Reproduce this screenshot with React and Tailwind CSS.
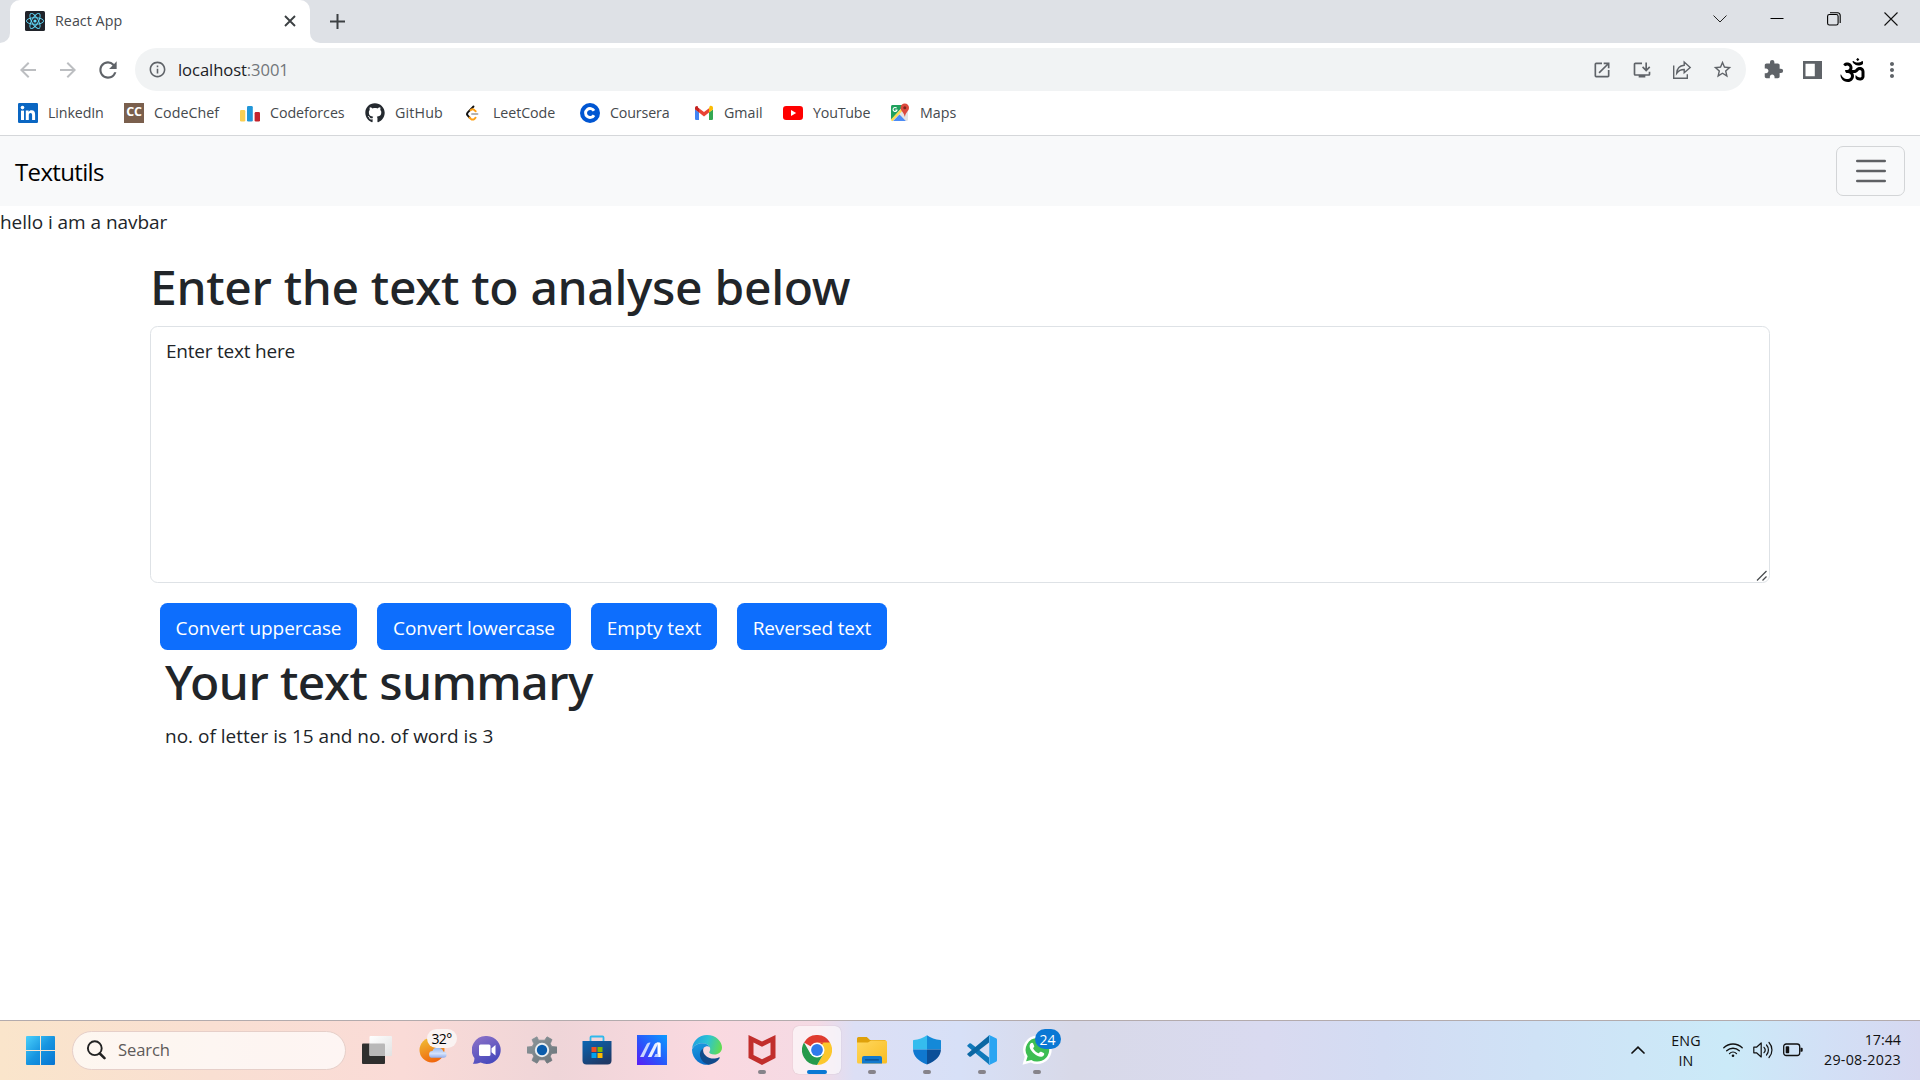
import {
  MdArrowBack,
  MdArrowForward,
  MdExtension,
  MdInfoOutline,
  MdInstallDesktop,
  MdMoreVert,
  MdOpenInNew,
  MdRefresh,
  MdStarOutline,
} from "react-icons/md";
import { FaGithub, FaOm } from "react-icons/fa";

/* ---------- Favicons ---------- */

function ReactFavicon() {
  return (
    <svg viewBox="0 0 20 20" className="h-5 w-5 shrink-0">
      <rect width="20" height="20" rx="1.5" fill="#20232a" />
      <g fill="none" stroke="#61dafb" strokeWidth="0.9">
        <ellipse cx="10" cy="10" rx="8.6" ry="3.3" />
        <ellipse cx="10" cy="10" rx="8.6" ry="3.3" transform="rotate(60 10 10)" />
        <ellipse cx="10" cy="10" rx="8.6" ry="3.3" transform="rotate(120 10 10)" />
      </g>
      <circle cx="10" cy="10" r="1.6" fill="#61dafb" />
    </svg>
  );
}

function LinkedInIcon() {
  return (
    <svg viewBox="0 0 20 20" className="h-5 w-5">
      <rect width="20" height="20" rx="1.2" fill="#0a66c2" />
      <g fill="#fff">
        <circle cx="4.5" cy="4.6" r="1.8" />
        <rect x="3" y="7.6" width="3" height="9.4" />
        <path d="M7.8 7.6h2.8v1.3c.5-.9 1.5-1.6 3-1.6 2.8 0 3.5 1.8 3.5 4.4V17h-3v-4.7c0-1.3-.2-2.3-1.6-2.3s-1.7 1-1.7 2.3V17h-3z" />
      </g>
    </svg>
  );
}

function CodeChefIcon() {
  return (
    <div className="flex h-5 w-5 items-center justify-center bg-[#7a5f4d] pb-0.5 font-['Open_Sans'] text-[12.5px] leading-none font-bold tracking-[-0.3px] text-white">
      CC
    </div>
  );
}

function CodeforcesIcon() {
  return (
    <svg viewBox="0 0 20 20" className="h-5 w-5">
      <rect x="0" y="7" width="5.3" height="11.6" rx="1.3" fill="#fbcf52" />
      <rect x="7" y="3" width="5.8" height="15.6" rx="1.3" fill="#2196d8" />
      <rect x="14.6" y="9" width="5.4" height="9.6" rx="1.3" fill="#c3232c" />
    </svg>
  );
}

function LeetCodeIcon() {
  return (
    <svg viewBox="0 0 20 20" className="h-5 w-5" fill="none" strokeLinecap="round" strokeWidth="1.9">
      <path d="M10.500 3.500 4.800 9.300c-1.100 1.200-1.100 2.300 0 3.400l1.700 1.800" stroke="#111" />
      <path d="M6.500 14.500l1.200 1.200c1.200 1.100 2.700 1.100 3.900 0l1-1" stroke="#ffa116" />
      <path d="M7.500 7.200c1.500-1.200 2.900-1.100 4 0l1.200 1.100" stroke="#ffa116" />
      <path d="M9 11h5.500" stroke="#b3b3b3" />
    </svg>
  );
}

function CourseraIcon() {
  return (
    <svg viewBox="0 0 20 20" className="h-5 w-5">
      <circle cx="10" cy="10" r="10" fill="#0056d2" />
      <path d="M14 7.800A4.500 4.500 0 1 0 14 12.200" fill="none" stroke="#fff" strokeWidth="2.900" />
    </svg>
  );
}

function GmailIcon() {
  return (
    <svg viewBox="0 0 20 20" className="h-5 w-5">
      <path d="M1 6.500v9.200c0 .7.600 1.300 1.300 1.300H5V9.300z" fill="#4285f4" />
      <path d="M19 6.500v9.200c0 .7-.6 1.300-1.300 1.300H15V9.300z" fill="#34a853" />
      <path d="M15 5.300v4.300l4-3V5c0-2-2-2.700-3.300-1.800z" fill="#fbbc04" />
      <path d="M5 9.600V5.300l5 3.700 5-3.700v4.300l-5 3.800z" fill="#ea4335" />
      <path d="M1 5v1.600l4 3V5.300l-.8-.6-.5-1.500C2.500 2.500 1 3.300 1 5z" fill="#c5221f" />
    </svg>
  );
}

function YouTubeIcon() {
  return (
    <svg viewBox="0 0 20 20" className="h-5 w-5">
      <rect y="3" width="20" height="14" rx="3.200" fill="#f00" />
      <path d="M8 7v6l5.200-3z" fill="#fff" />
    </svg>
  );
}

function MapsIcon() {
  return (
    <svg viewBox="0 0 20 20" className="h-5 w-5">
      <path d="M2.500 2H14l4 7v7.500c0 .8-.7 1.500-1.500 1.500h-14C1.700 18 1 17.300 1 16.500v-13C1 2.700 1.700 2 2.500 2z" fill="#e4e4e4" />
      <path d="M2.500 2H14L1.500 16.500C1 16 1 15 1 15V3.500C1 2.700 1.700 2 2.500 2z" fill="#1fa15d" />
      <path d="M1.500 17.500 14.500 4" stroke="#fddb4f" strokeWidth="2.400" />
      <path d="m9.500 11.500 6.300 6.500H3.200z" fill="#4c8bf5" />
      <path d="M14.800.5c2.400 0 4.200 1.800 4.200 4.200 0 3.300-3.300 4.300-4 8.800h-.4c-.7-4.500-4-5.500-4-8.800 0-2.400 1.800-4.200 4.200-4.200z" fill="#dc4a3d" />
      <circle cx="14.800" cy="4.700" r="1.500" fill="#7d251e" />
      <path d="M6.600 5.200A2 2 0 1 0 7 7H5.300" fill="none" stroke="#fff" strokeWidth="1.100" />
    </svg>
  );
}

/* ---------- Browser chrome ---------- */

function TabStrip() {
  return (
    <div className="flex h-[43px] bg-white">
      <div className="w-2.5 rounded-br-[10px] bg-[#dee1e6]" />
      <div className="w-[300px] bg-[#dee1e6]">
        <div className="flex h-full items-center rounded-t-[10px] bg-white pr-[14px] pb-[1px] pl-[15px]">
          <ReactFavicon />
          <span className="ml-[10px] grow text-[14.250px] tracking-[0.050px] text-[#45494d]">React App</span>
          <svg viewBox="0 0 12 12" className="h-3 w-3" stroke="#3c4043" strokeWidth="1.900">
            <path d="M1 1l10 10M11 1 1 11" />
          </svg>
        </div>
      </div>
      <div className="flex grow items-start rounded-bl-[10px] bg-[#dee1e6] pl-5">
        <svg viewBox="0 0 15 15" className="mt-[14px] h-[15px] w-[15px]" stroke="#3c4043" strokeWidth="2">
          <path d="M7.500 0v15M0 7.500h15" />
        </svg>
        <div className="mt-3 mr-[22px] ml-auto flex items-center gap-[43px]">
          <svg viewBox="0 0 14 14" className="h-3.5 w-3.5" fill="none" stroke="#222" strokeWidth="1">
            <path d="m.5 3.500 6.500 6.500 6.500-6.500" />
          </svg>
          <svg viewBox="0 0 14 14" className="h-3.5 w-3.5" stroke="#000" strokeWidth="1">
            <path d="M.5 6.500h13" />
          </svg>
          <svg viewBox="0 0 14 14" className="h-3.5 w-3.5" fill="none" stroke="#000" strokeWidth="1.100">
            <rect x="0.600" y="2.500" width="10.500" height="10.500" rx="1.800" />
            <path d="M3 .7h7.500A2.800 2.800 0 0 1 13.200 3.500V11" />
          </svg>
          <svg viewBox="0 0 14 14" className="h-3.5 w-3.5" stroke="#111" strokeWidth="1.100">
            <path d="m.5.5 13 13M13.500.5l-13 13" />
          </svg>
        </div>
      </div>
    </div>
  );
}

function ShareIcon() {
  return (
    <svg viewBox="0 0 20 20" className="h-5 w-5" fill="none" stroke="#5f6368" strokeWidth="1.400">
      <path d="M1.700 5.500v12.800h13.600v-4" />
      <path d="M12.200 2v3.300C7.500 5.700 5 9 4.700 13.300c1.800-2.600 4-3.800 7.500-3.800v3.300l6-5.400z" />
    </svg>
  );
}

function Toolbar() {
  return (
    <div className="flex h-[53px] items-center pr-4 pl-4">
      <MdArrowBack className="h-6 w-6 text-[#bcbec1]" />
      <MdArrowForward className="ml-4 h-6 w-6 text-[#bcbec1]" />
      <MdRefresh className="ml-[15px] h-[26px] w-[26px] text-[#5f6368]" />
      <div className="ml-[14px] flex h-[43px] grow items-center rounded-full bg-[#f1f3f4] pr-[13px] pl-[13px]">
        <MdInfoOutline className="h-[19px] w-[19px] text-[#5f6368]" />
        <span className="ml-[11px] grow pt-[1px] text-[16.600px] tracking-[-0.080px] text-[#202124]">
          localhost<span className="text-[#72767a]">:3001</span>
        </span>
        <div className="flex items-center gap-5 text-[#5f6368]">
          <MdOpenInNew className="h-5 w-5" />
          <MdInstallDesktop className="h-5 w-5" />
          <ShareIcon />
          <MdStarOutline className="h-[21px] w-[21px]" />
        </div>
      </div>
      <MdExtension className="ml-[17px] h-[21px] w-[21px] text-[#5f6368]" />
      <svg viewBox="0 0 19 18" className="ml-[19px] h-[18px] w-[19px]">
        <path fillRule="evenodd" d="M0 0h19v18H0zM2.500 2.800v12.400h9.300V2.800z" fill="#5f6368" />
      </svg>
      <FaOm className="ml-[18px] h-6 w-[25px] text-black" />
      <MdMoreVert className="ml-[15px] h-6 w-6 text-[#5f6368]" />
    </div>
  );
}

function Bookmark({ icon, label, className }) {
  return (
    <div className="flex shrink-0 items-center gap-2.5">
      {icon}
      <span className={className}>{label}</span>
    </div>
  );
}

function BookmarksBar() {
  return (
    <div className="flex h-[40px] items-center border-b border-[#d5d7da] pb-[5px] pl-[18px] text-[14.250px] text-[#45494d]">
      <Bookmark icon={<LinkedInIcon />} label="LinkedIn" className="w-[76px] tracking-[-0.120px]" />
      <Bookmark icon={<CodeChefIcon />} label="CodeChef" className="w-[86px] tracking-[0.050px]" />
      <Bookmark icon={<CodeforcesIcon />} label="Codeforces" className="w-[95px] tracking-[-0.050px]" />
      <Bookmark
        icon={<FaGithub className="h-5 w-5 text-[#24292f]" />}
        label="GitHub"
        className="w-[68px] tracking-[0.150px]"
      />
      <Bookmark icon={<LeetCodeIcon />} label="LeetCode" className="w-[87px] tracking-[-0.080px]" />
      <Bookmark icon={<CourseraIcon />} label="Coursera" className="w-[84px] tracking-[-0.150px]" />
      <Bookmark icon={<GmailIcon />} label="Gmail" className="w-[59px]" />
      <Bookmark icon={<YouTubeIcon />} label="YouTube" className="w-[77px] tracking-[-0.200px]" />
      <Bookmark icon={<MapsIcon />} label="Maps" />
    </div>
  );
}

/* ---------- Page ---------- */

function Navbar() {
  return (
    <nav className="flex h-[70px] items-center justify-between bg-[#f8f9fa] px-[15px]">
      <span className="pt-[1px] text-[24px] tracking-[-0.650px] text-black">Textutils</span>
      <button className="flex h-[50px] w-[69px] items-center justify-center rounded-[7px] border border-[#d3d5d7]">
        <svg viewBox="0 0 30 24" className="h-6 w-[30px]" stroke="#5f6164" strokeWidth="2.500" strokeLinecap="round">
          <path d="M1.250 2h27.500M1.250 12h27.500M1.250 22h27.500" />
        </svg>
      </button>
    </nav>
  );
}

function PrimaryButton({ children, className }) {
  return (
    <button
      className={`h-[47px] rounded-[7.500px] bg-[#0d6efd] pt-1 text-center text-[19px] whitespace-nowrap text-white ${className}`}
    >
      {children}
    </button>
  );
}

function TextForm() {
  return (
    <main className="mx-[150px] grow text-[19px] text-[#212529]">
      <h1 className="mt-[20px] font-['Noto_Sans'] text-[48px] leading-[60px] font-medium tracking-[-0.320px]">
        Enter the text to analyse below
      </h1>
      <div className="mt-[9px] flex h-[257px] flex-col justify-between rounded-[7.500px] border border-[#dee2e6] pl-[15px]">
        <p className="mt-[9px] leading-[30px] tracking-[-0.220px]">Enter text here</p>
        <svg viewBox="0 0 12 12" className="mr-[1px] mb-0 h-3 w-3 self-end" stroke="#4a4d50" strokeWidth="1.300">
          <path d="M1 10.500 10.500 1M6.500 10.500l4-4" />
        </svg>
      </div>
      <div className="mt-5 ml-2.5 flex gap-5">
        <PrimaryButton className="w-[197px] tracking-[-0.090px]">Convert uppercase</PrimaryButton>
        <PrimaryButton className="w-[194px] tracking-[-0.090px]">Convert lowercase</PrimaryButton>
        <PrimaryButton className="w-[126px] tracking-[-0.050px]">Empty text</PrimaryButton>
        <PrimaryButton className="w-[150px] tracking-[-0.180px]">Reversed text</PrimaryButton>
      </div>
      <section className="ml-[15px]">
        <h1 className="mt-[2px] font-['Noto_Sans'] text-[48px] leading-[60px] font-medium tracking-[-0.560px]">
          Your text summary
        </h1>
        <p className="mt-[9px] leading-[30px]">no. of letter is 15 and no. of word is 3</p>
      </section>
    </main>
  );
}

/* ---------- Taskbar icons ---------- */

function StartIcon() {
  return (
    <svg viewBox="0 0 29 29" className="h-[29px] w-[29px]">
      <defs>
        <linearGradient id="start" x1="0" y1="0" x2="29" y2="29" gradientUnits="userSpaceOnUse">
          <stop stopColor="#4bd0fb" />
          <stop offset="0.500" stopColor="#1795e0" />
          <stop offset="1" stopColor="#0674d2" />
        </linearGradient>
      </defs>
      <path
        fill="url(#start)"
        d="M1 0h13v14H0V1a1 1 0 0 1 1-1zM15 0h13a1 1 0 0 1 1 1v13H15zM0 15h14v14H1a1 1 0 0 1-1-1zM15 15h14v13a1 1 0 0 1-1 1H15z"
      />
    </svg>
  );
}

function TaskViewIcon() {
  return (
    <svg viewBox="0 0 30 30" className="h-[30px] w-[30px]">
      <defs>
        <linearGradient id="tvLight" x1="0" y1="0" x2="1" y2="1">
          <stop stopColor="#fff" />
          <stop offset="1" stopColor="#e2e2e2" />
        </linearGradient>
      </defs>
      <rect x="0" y="8.500" width="23" height="20.500" rx="1" fill="#2f2f2e" />
      <rect x="7.500" y="1" width="22.500" height="20" rx="1" fill="url(#tvLight)" />
      <path d="M7.500 8.500H22a1 1 0 0 1 1 1V21H8.500a1 1 0 0 1-1-1z" fill="#b9b8b8" />
    </svg>
  );
}

function WeatherIcon() {
  return (
    <div className="relative h-[30px] w-[30px]">
      <svg viewBox="0 0 30 30" className="h-[30px] w-[30px]">
        <defs>
          <linearGradient id="sun" x1="0.200" y1="0" x2="0.600" y2="1">
            <stop stopColor="#f0bd35" />
            <stop offset="1" stopColor="#f0640c" />
          </linearGradient>
          <linearGradient id="cloud" x1="0" y1="0" x2="0" y2="1">
            <stop stopColor="#8fb4ee" />
            <stop offset="0.600" stopColor="#d6e3fa" />
            <stop offset="1" stopColor="#8facec" />
          </linearGradient>
        </defs>
        <circle cx="15" cy="15" r="12.500" fill="url(#sun)" />
        <path d="M15.500 22.800a3.400 3.400 0 0 1 0-6.800c1-2.600 3.400-4 6-3.600 2.600.4 4.300 2 4.700 4a3.200 3.200 0 0 1 .3 6.400z" fill="url(#cloud)" />
      </svg>
      <span className="absolute -top-[6px] left-[10px] flex h-[19px] w-[30px] items-center justify-center rounded-full bg-[#faf3f2] text-[14px] tracking-[-0.600px] text-black">
        32°
      </span>
    </div>
  );
}

function ChatIcon() {
  return (
    <svg viewBox="0 0 30 30" className="h-[30px] w-[30px]">
      <defs>
        <linearGradient id="chat" x1="0" y1="0" x2="0.500" y2="1">
          <stop stopColor="#9074c8" />
          <stop offset="1" stopColor="#4a4bbd" />
        </linearGradient>
      </defs>
      <path d="M15 1a14 14 0 1 1-6.400 26.600C6 28.800 3 29 .8 28.800c1-1.300 1.700-3.600 1.600-5.800A14 14 0 0 1 15 1z" fill="url(#chat)" />
      <rect x="7" y="9.500" width="11.500" height="11.500" rx="1.500" fill="#fff" />
      <path d="M19.500 13.300 23.500 10v10.500l-4-3.300z" fill="#fff" />
    </svg>
  );
}

function SettingsIcon() {
  return (
    <svg viewBox="0 0 30 30" className="h-[30px] w-[30px]">
      <defs>
        <linearGradient id="gear" x1="0" y1="0" x2="1" y2="1">
          <stop stopColor="#8d979c" />
          <stop offset="1" stopColor="#6a7378" />
        </linearGradient>
      </defs>
      <path
        d="M11.500 5.200 10 1.800 5 4.600l1.800 4.200-1.600 2.700L0 12v6l5.200.5 1.600 2.700L5 25.400l5 2.800 2.300-3.400h5.400l2.300 3.400 5-2.800-1.800-4.200 1.600-2.700L30 18v-6l-5.200-.5-1.600-2.700L25 4.600l-5-2.800-2.300 3.400z"
        fill="url(#gear)"
        stroke="url(#gear)"
        strokeLinejoin="round"
        strokeWidth="0.800"
      />
      <circle cx="15" cy="15" r="7.200" fill="#e9eef1" />
      <circle cx="15" cy="15" r="5.200" fill="#0a5cab" />
    </svg>
  );
}

function StoreIcon() {
  return (
    <svg viewBox="0 0 30 30" className="h-[30px] w-[30px]">
      <defs>
        <linearGradient id="store" x1="0" y1="0" x2="0.600" y2="1">
          <stop stopColor="#0a66b4" />
          <stop offset="1" stopColor="#1f3a67" />
        </linearGradient>
      </defs>
      <path d="M8.500 7V2.500a1 1 0 0 1 1-1h11a1 1 0 0 1 1 1V7" fill="none" stroke="#2fb9ec" strokeWidth="1.800" />
      <path d="M.5 6h29v19.500a4 4 0 0 1-4 4h-21a4 4 0 0 1-4-4z" fill="url(#store)" />
      <path d="M9.500 12h5v5h-5z" fill="#f25022" />
      <path d="M15.500 12h5v5h-5z" fill="#7fba00" />
      <path d="M9.500 18h5v5h-5z" fill="#00a4ef" />
      <path d="M15.500 18h5v5h-5z" fill="#ffb900" />
    </svg>
  );
}

function MyAsusIcon() {
  return (
    <svg viewBox="0 0 30 30" className="h-[30px] w-[30px]">
      <defs>
        <linearGradient id="asus" x1="1" y1="0" x2="0" y2="1">
          <stop stopColor="#0b9cff" />
          <stop offset="0.550" stopColor="#2a55fb" />
          <stop offset="1" stopColor="#5a1cf5" />
        </linearGradient>
      </defs>
      <rect width="30" height="30" fill="url(#asus)" />
      <path d="M3 22 9.500 9.500c.7-1.300 1.700-2 3.300-2h.7L6.700 22z" fill="#c9d6ff" />
      <path d="M10.800 22l6.500-12.500c.7-1.300 1.700-2 3.200-2h1.200L14.500 22z" fill="#e8eeff" />
      <path d="M20.200 7.500h2c1 0 1.500.5 1.500 1.500V22h-3.200V10z" fill="#fff" />
      <path d="M17 22l1.500-3h3v3z" fill="#b9cbff" />
    </svg>
  );
}

function EdgeIcon() {
  return (
    <svg viewBox="0 0 30 30" className="h-[30px] w-[30px]">
      <defs>
        <linearGradient id="edgeTop" x1="0" y1="0.300" x2="1" y2="0.500">
          <stop stopColor="#1f9fe0" />
          <stop offset="0.500" stopColor="#2cc3d4" />
          <stop offset="1" stopColor="#62dc51" />
        </linearGradient>
        <linearGradient id="edgeLeft" x1="0.200" y1="0" x2="0.500" y2="1">
          <stop stopColor="#1a9be0" />
          <stop offset="1" stopColor="#0a6bc8" />
        </linearGradient>
      </defs>
      <path d="M.1 13.800C.8 6 7 0 15 0c9 0 15 6.500 15 12.500 0 4.800-3.800 7-7.500 7-3.500 0-5.300-1.200-5.300-2.200 0-.8 1-1.200 1-3.300 0-2.800-3.200-5.800-8-5.800-5 0-8.500 2.500-10.100 5.600z" fill="url(#edgeTop)" />
      <path d="M0 14.500C1.500 10.600 5.500 8.200 10.200 8.200c3.600 0 6.300 1.500 7.500 3.600-2-1-4.500-.6-6.200 1.100-2.300 2.300-2.600 6.200-.8 9.900 1.500 3 4 5.400 7.300 6.700A15 15 0 0 1 0 15z" fill="url(#edgeLeft)" />
      <path d="M11.800 13c-3 1.800-4.800 5.300-3.300 9.400 1.400 3.800 4.800 7 9.600 7.100 4.200-.8 7.500-3 9.500-6.200.4-.6-.2-1.200-.9-.8-1.500.8-3.400 1.100-5 1.100-5.700 0-10.300-3.700-10.600-8.200 0-.9.200-1.700.7-2.400z" fill="#114a8b" />
    </svg>
  );
}

function McAfeeIcon() {
  return (
    <svg viewBox="0 0 30 30" className="h-[30px] w-[30px]">
      <path
        fillRule="evenodd"
        d="M1.500 0 15 6.500 28.500 0v23L15 30 1.500 23zM6.500 7.500V20L15 24.300 23.500 20V7.500L15 11.700z"
        fill="#c12e2c"
      />
    </svg>
  );
}

function ChromeIcon() {
  return (
    <svg viewBox="0 0 30 30" className="h-[30px] w-[30px]">
      <path d="M15 15 2 7.500A15 15 0 0 1 28 7.500z" fill="#df3b2f" />
      <path d="M15 7.500h13A15 15 0 0 1 15 30l6.500-11.300z" fill="#fcc72c" />
      <path d="M2 7.500A15 15 0 0 0 15 30l6.500-11.200-13-.1z" fill="#259a4b" />
      <path d="M15 7.500h6.600L15 15z" fill="#df3b2f" />
      <circle cx="15" cy="15" r="7.500" fill="#fff" />
      <circle cx="15" cy="15" r="5.900" fill="#2f7bea" />
    </svg>
  );
}

function FolderIcon() {
  return (
    <svg viewBox="0 0 30 30" className="h-[30px] w-[30px]">
      <defs>
        <linearGradient id="folder" x1="0" y1="0" x2="1" y2="1">
          <stop stopColor="#ffd75e" />
          <stop offset="1" stopColor="#f9bd22" />
        </linearGradient>
      </defs>
      <path d="M0 3.500A1.500 1.500 0 0 1 1.500 2h8.300L13 5h15.500v5H0z" fill="#dfa10b" />
      <path d="M0 7.500h11l3-2h14.500A1.500 1.500 0 0 1 30 7v20a1.500 1.500 0 0 1-1.500 1.500h-27A1.500 1.500 0 0 1 0 27z" fill="url(#folder)" />
      <path d="M5 28.500V23a2 2 0 0 1 2-2h16a2 2 0 0 1 2 2v5.500z" fill="#1279cd" />
      <path d="M8.500 24.800h13" stroke="#0a4d8c" strokeWidth="1.200" strokeLinecap="round" />
    </svg>
  );
}

function ShieldIcon() {
  return (
    <svg viewBox="0 0 30 30" className="h-[30px] w-[30px]">
      <defs>
        <clipPath id="shieldClip">
          <path d="M15 .3C18.500 3 23.500 4.800 28.300 5c.5 0 .7.3.7.700V14c0 7-5.500 12.500-14 15.500C6.500 26.500 1 21 1 14V5.700c0-.4.200-.7.7-.7C6.500 4.800 11.500 3 15 .3z" />
        </clipPath>
      </defs>
      <g clipPath="url(#shieldClip)">
        <path d="M0 0h15v14.500H0z" fill="#35bcee" />
        <path d="M15 0h15v14.500H15z" fill="#1489d8" />
        <path d="M0 14.500h15V30H0z" fill="#0f78d0" />
        <path d="M15 14.500h15V30H15z" fill="#0b4f98" />
      </g>
    </svg>
  );
}

function VSCodeIcon() {
  return (
    <svg viewBox="0 0 30 30" className="h-[30px] w-[30px]">
      <path d="M.5 10.200 2.300 8.500a1.400 1.400 0 0 1 1.700 0L22 22.500v7L.6 11.500a.9.900 0 0 1-.1-1.300z" fill="#1079ba" />
      <path d="M.5 19.800 2.300 21.500a1.400 1.400 0 0 0 1.700 0L22 7.500v-7L.6 18.500a.9.900 0 0 0-.1 1.300z" fill="#0b67a3" />
      <path d="M21.500 29.700a1.600 1.600 0 0 0 1.300.1l6.200-3a1.700 1.700 0 0 0 1-1.500V4.700a1.700 1.700 0 0 0-1-1.500L22.800.2a1.600 1.600 0 0 0-1.300.1c.5.2.8.7.8 1.200v27c0 .5-.3 1-.8 1.200z" fill="#2aa5f2" />
    </svg>
  );
}

function WhatsAppIcon() {
  return (
    <div className="relative h-[30px] w-[30px]">
      <svg viewBox="0 0 30 30" className="h-[30px] w-[30px]">
        <path d="M15.500.5a14.300 14.300 0 1 1-6.700 27L.5 29.700l2.300-8A14.300 14.300 0 0 1 15.500.5z" fill="#fff" />
        <path d="M15.500 3a11.800 11.800 0 1 1-6.200 21.900l-5.200 1.400 1.500-5A11.800 11.800 0 0 1 15.500 3z" fill="#3dbe52" />
        <path
          d="M11 8.200c-.4-.8-1.500-.7-2.200 0-3 3.200.3 7.800 3.200 10.300 2.900 2.400 7.300 4.700 9.700 1.900.8-1 .7-1.900 0-2.300l-2.500-1.300c-.8-.4-1.300.1-1.900 1-.4.500-.8.5-1.400.2-2-.9-3.600-2.300-4.600-4.200-.3-.5-.1-.8.3-1.200.6-.7.8-1.200.5-1.900z"
          fill="#fff"
        />
      </svg>
      <span className="absolute -top-[6px] left-[13px] flex h-5 w-[26px] items-center justify-center rounded-full bg-[#0a78d4] text-[14px] text-white">
        24
      </span>
    </div>
  );
}

/* ---------- Taskbar ---------- */

function TaskItem({ children, running, active }) {
  return (
    <div className="flex w-[55px] justify-center">
      <div
        className={
          active
            ? "flex h-12 w-12 flex-col items-center rounded-md bg-white/60 pt-[9px] shadow-[0_0_1px_rgba(0,0,0,0.250)]"
            : "flex h-12 w-12 flex-col items-center pt-[9px]"
        }
      >
        {children}
        {running && <div className="mt-[5px] h-1 w-2 rounded-full bg-[#86838a]" />}
        {active && <div className="mt-[5px] h-1 w-5 rounded-full bg-[#0a78d4]" />}
      </div>
    </div>
  );
}

function TrayIcons() {
  return (
    <div className="flex items-center gap-2.5">
      <svg viewBox="0 0 20 16" className="h-4 w-5" fill="none" stroke="#111" strokeWidth="1.300" strokeLinecap="round">
        <path d="M.8 5.800a13 13 0 0 1 18.400 0M3.700 8.800a9 9 0 0 1 12.600 0M6.500 11.600a5 5 0 0 1 7 0" />
        <circle cx="10" cy="13.700" r="1.300" fill="#111" stroke="none" />
      </svg>
      <svg viewBox="0 0 20 18" className="h-[18px] w-5" fill="none" stroke="#111" strokeWidth="1.200" strokeLinecap="round" strokeLinejoin="round">
        <path d="M.8 6.200h2.700L8.200 2v14l-4.700-4.200H.8zM11 6.300a4 4 0 0 1 0 5.400M13.500 4a7.500 7.500 0 0 1 0 10M16 1.500a11 11 0 0 1 0 15" />
      </svg>
      <svg viewBox="0 0 20 14" className="h-3.5 w-5">
        <rect x="0.700" y="1" width="16" height="11.500" rx="2.500" fill="none" stroke="#111" strokeWidth="1.300" />
        <rect x="2.700" y="3.200" width="3.500" height="7" rx="0.800" fill="#111" />
        <path d="M17.500 4.800h1.200a1 1 0 0 1 1 1v2a1 1 0 0 1-1 1h-1.200z" fill="#111" />
      </svg>
    </div>
  );
}

function Taskbar() {
  return (
    <footer className="flex h-[60px] items-center border-t border-[#b3abad] bg-[linear-gradient(90deg,#fae5cb_0%,#f9dfd2_11%,#fadbd7_21%,#efd5d8_29%,#fad9e0_37%,#f5dae4_42.500%,#dcdff5_44.500%,#d7e0f7_50%,#d8d9e8_56%,#d9daf0_66%,#d3dcf3_72%,#cfe2f6_80%,#cbeaf8_90%,#d2e0f6_95%,#d6d8f1_100%)] pr-[19px] pb-[1px] pl-[26px] text-[#111]">
      <StartIcon />
      <div className="ml-[17px] flex h-[39px] w-[274px] items-center rounded-full border border-[#e6cfc9] bg-white/70 pl-[13px]">
        <svg viewBox="0 0 20 20" className="h-5 w-5" fill="none" stroke="#222" strokeWidth="1.900" strokeLinecap="round">
          <circle cx="8.800" cy="8.200" r="6.900" />
          <path d="m13.800 13.500 4.700 4.700" strokeWidth="2.500" />
        </svg>
        <span className="ml-[12px] pt-[1px] text-[16.600px] tracking-[-0.100px] text-[#5d5a59]">Search</span>
      </div>
      <div className="ml-[3px] flex items-center">
        <TaskItem><TaskViewIcon /></TaskItem>
        <TaskItem><WeatherIcon /></TaskItem>
        <TaskItem><ChatIcon /></TaskItem>
        <TaskItem><SettingsIcon /></TaskItem>
        <TaskItem><StoreIcon /></TaskItem>
        <TaskItem><MyAsusIcon /></TaskItem>
        <TaskItem><EdgeIcon /></TaskItem>
        <TaskItem running><McAfeeIcon /></TaskItem>
        <TaskItem active><ChromeIcon /></TaskItem>
        <TaskItem running><FolderIcon /></TaskItem>
        <TaskItem running><ShieldIcon /></TaskItem>
        <TaskItem running><VSCodeIcon /></TaskItem>
        <TaskItem running><WhatsAppIcon /></TaskItem>
      </div>
      <svg viewBox="0 0 14 8" className="ml-auto h-2 w-3.5" fill="none" stroke="#111" strokeWidth="1.700" strokeLinecap="round">
        <path d="m1 7 6-5.800L13 7" />
      </svg>
      <div className="ml-[25px] w-[32px] pt-[1px] text-center text-[14.250px] leading-5 tracking-[0.100px]">
        ENG
        <br />
        IN
      </div>
      <div className="ml-[21px]">
        <TrayIcons />
      </div>
      <div className="ml-[20px] w-[78px] text-right text-[14.250px] leading-5">
        <div>17:44</div>
        <div className="tracking-[0.260px]">29-08-2023</div>
      </div>
    </footer>
  );
}

export default function App() {
  return (
    <div className="flex h-[1080px] w-[1920px] flex-col overflow-hidden bg-white font-['Open_Sans','Noto_Sans',sans-serif]">
      <TabStrip />
      <Toolbar />
      <BookmarksBar />
      <Navbar />
      <p className="mt-[1px] text-[19px] leading-[30px] tracking-[-0.050px] text-[#212529]">hello i am a navbar</p>
      <TextForm />
      <Taskbar />
    </div>
  );
}
